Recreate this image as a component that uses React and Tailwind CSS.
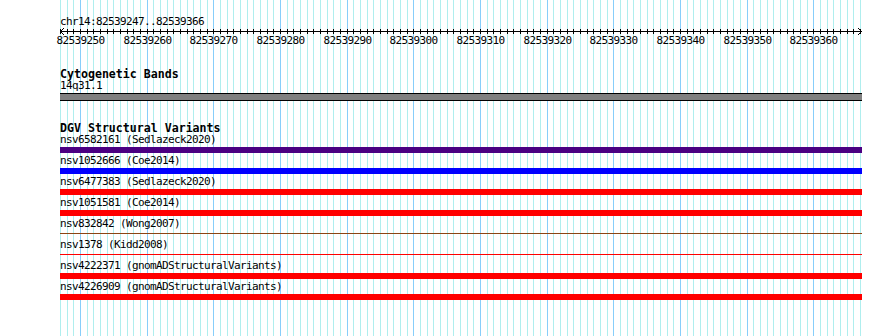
import React from "react";

const START = 82539247;
const SPAN = 120;
const LEFT = 60;
const PX = 800 / SPAN;

const rows = [
  { label: "nsv6582161 (Sedlazeck2020)", kind: "bar", color: "bg-[#4b0082]" },
  { label: "nsv1052666 (Coe2014)", kind: "bar", color: "bg-[#0000ff]" },
  { label: "nsv6477383 (Sedlazeck2020)", kind: "bar", color: "bg-[#ff0000]" },
  { label: "nsv1051581 (Coe2014)", kind: "bar", color: "bg-[#ff0000]" },
  { label: "nsv832842 (Wong2007)", kind: "line", color: "bg-[#8b4513]" },
  { label: "nsv1378 (Kidd2008)", kind: "line", color: "bg-[#ff0000]" },
  { label: "nsv4222371 (gnomADStructuralVariants)", kind: "bar", color: "bg-[#ff0000]" },
  { label: "nsv4226909 (gnomADStructuralVariants)", kind: "bar", color: "bg-[#ff0000]" },
];

const mono = { fontFamily: '"DejaVu Sans Mono", "Liberation Mono", monospace' };

function Grid() {
  const lines = [];
  for (let k = 0; k <= SPAN; k++) {
    const x = Math.round(LEFT + k * PX) + 0.5;
    const major = (START + k) % 10 === 0;
    lines.push(
      <line
        key={k}
        x1={x}
        x2={x}
        y1={0}
        y2={336}
        stroke={major ? "#87cefa" : "#afeeee"}
        strokeWidth={1}
      />
    );
  }
  return (
    <svg className="absolute inset-0" width="890" height="336" shapeRendering="crispEdges">
      {lines}
    </svg>
  );
}

function Ruler() {
  const ticks = [];
  const labels = [];
  for (let k = 0; k <= SPAN; k++) {
    const x = Math.round(LEFT + k * PX) + 0.5;
    ticks.push(<line key={k} x1={x} x2={x} y1={29} y2={34} stroke="#000" />);
    if ((START + k) % 10 === 0) {
      labels.push(
        <text key={k} x={x} y={44} textAnchor="middle" fontSize="11" letterSpacing="-0.62" fill="#000">
          {START + k}
        </text>
      );
    }
  }
  return (
    <svg className="absolute inset-0" width="890" height="60" style={mono} shapeRendering="crispEdges">
      <text x={60} y={25} fontSize="11" letterSpacing="-0.62" fill="#000">
        chr14:82539247..82539366
      </text>
      <line x1={60} x2={862} y1={31.5} y2={31.5} stroke="#000" />
      <polyline points="64,28 60.5,31.5 64,35" fill="none" stroke="#000" />
      <polyline points="858,28 861.5,31.5 858,35" fill="none" stroke="#000" />
      {ticks}
      {labels}
    </svg>
  );
}

function Title({ children, className = "" }) {
  return (
    <div className={`h-[12px] text-[11.6px] leading-[12px] font-bold text-black whitespace-nowrap ${className}`}>
      {children}
    </div>
  );
}

function Label({ children }) {
  return (
    <div className="h-[12px] text-[11px] leading-[12px] tracking-[-0.62px] text-black whitespace-nowrap">
      {children}
    </div>
  );
}

export default function App() {
  return (
    <div className="relative w-[890px] h-[336px] bg-white overflow-hidden" style={mono}>
      <Grid />
      <Ruler />
      <div className="relative pl-[60px] pt-[68px] w-[862px]">
        <Title>Cytogenetic Bands</Title>
        <Label>14q31.1</Label>
        <div className="mt-[1px] h-[8px] w-[802px] bg-[#808080] border-y border-black" />

        <Title className="mt-[21px]">DGV Structural Variants</Title>
        <div className="flex flex-col">
          {rows.map((r) => (
            <div key={r.label} className="h-[21px] flex flex-col">
              <Label>{r.label}</Label>
              <div className="mt-[1px] h-[6px] w-[802px] flex flex-col">
                {r.kind === "bar" ? (
                  <div className={`h-[6px] ${r.color}`} />
                ) : (
                  <div className={`mt-[2px] h-[1px] ${r.color}`} />
                )}
              </div>
            </div>
          ))}
        </div>
      </div>
    </div>
  );
}
